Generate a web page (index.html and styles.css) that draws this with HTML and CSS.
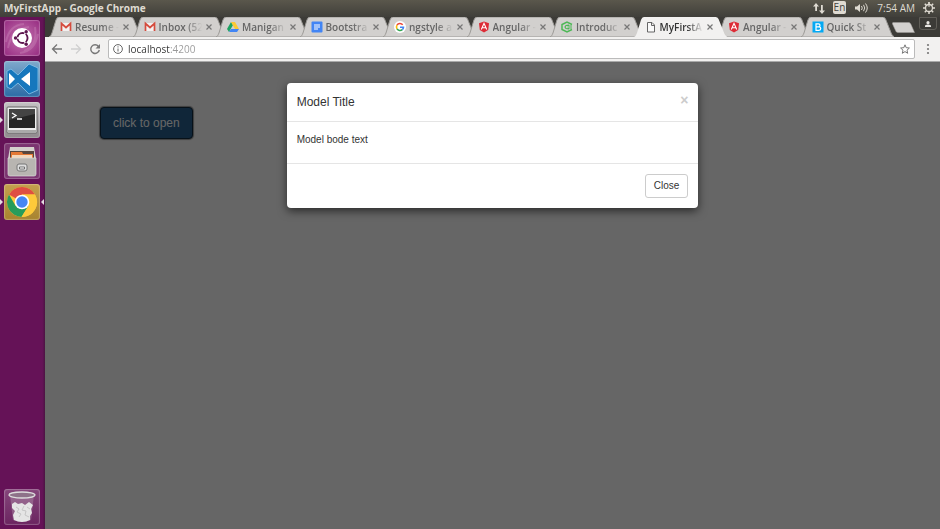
FILE: index.html
```html
<!DOCTYPE html>
<html lang="en">
<head>
  <meta charset="UTF-8">
  <meta name="viewport" content="width=device-width, initial-scale=1.0">
  <title>MyFirstApp</title>
  <link rel="stylesheet" href="styles.css">
</head>
<body>
  <!-- Shared icons -->
  <svg width="0" height="0" class="sprite" aria-hidden="true">
    <symbol id="tab-shape" viewBox="0 0 94 20" preserveAspectRatio="none">
      <path d="M0 20 C2 19 2 18 3 16 L7 3 Q8 0 10 0 H82 Q84 0 85 2 L91 17 Q92 19 94 20 Z"/>
    </symbol>
    <symbol id="gmail" viewBox="0 0 12 12">
      <path d="M1 2h10v8H1z" fill="#f3f1f0"/>
      <path d="M1.500 10V2.500L6 6.500l4.500-4V10" fill="none" stroke="#d54b3d" stroke-width="1.700"/>
    </symbol>
    <symbol id="angular" viewBox="0 0 12 12">
      <path d="M6 0.500l5 1.800-.8 6.700L6 11.500 1.800 9 1 2.300z" fill="#dd2c36"/>
      <path d="M3.300 8.500L6 2.300l2.700 6.200M4.500 6.800h3" fill="none" stroke="#fff" stroke-width="1.100"/>
    </symbol>
    <symbol id="cross" viewBox="0 0 8 8">
      <path d="M1.500 1.500l5 5M6.500 1.500l-5 5" fill="none" stroke="currentColor" stroke-width="1.200"/>
    </symbol>
  </svg>

  <header class="panel">
    <span class="panel-title">MyFirstApp - Google Chrome</span>
    <div class="indicators">
      <svg width="12" height="12" viewBox="0 0 12 12" fill="#dfdbd2"><path d="M3 1l3 3.500H4V9H2.200V4.500H0zM9 12L6 8.500h2V3h1.800v5.500H12z"/></svg>
      <span class="lang">En</span>
      <svg width="15" height="12" viewBox="0 0 15 12" fill="none" stroke="#dfdbd2"><path d="M1 4.500h2L6 2v8L3 7.500H1z" fill="#dfdbd2" stroke="none"/><path d="M7.500 4q1.500 2 0 4M9.500 2.800q2.500 3.200 0 6.400M11.500 1.500q3.500 4.500 0 9"/></svg>
      <time class="clock">7:54 AM</time>
      <svg width="12" height="12" viewBox="0 0 12 12" fill="none" stroke="#dfdbd2"><circle cx="6" cy="6" r="3.500" stroke-width="1.300"/><path d="M6 0v3M6 9.500V12M0 6h2.500M9.500 6H12M1.800 1.800l1.700 1.700M8.500 8.500l1.700 1.700M10.200 1.800L8.500 3.500M1.800 10.200l1.700-1.700" stroke-width="1.500"/><path d="M6 0v5" stroke-width="1"/></svg>
    </div>
  </header>

  <div class="desktop">
    <nav class="launcher">
      <a href="#" class="app app-dash" aria-label="Dash">
        <svg viewBox="0 0 36 36">
          <path d="M2 22Q5 5 20 4M34 14Q31 31 16 33M4 28Q7 10 25 7M31 7Q34 25 20 31" fill="none" stroke="#d79ac6" stroke-opacity=".3" stroke-width="2"/>
          <circle cx="18" cy="18" r="10" fill="#fff"/>
          <circle cx="18.500" cy="18" r="5" fill="none" stroke="#5e1750" stroke-width="2"/>
          <path d="M18.500 18L11 18M18.500 18l4-7M18.500 18l4 7" stroke="#fff" stroke-width="1.500"/>
          <circle cx="18.500" cy="18" r="3.800" fill="#fff"/>
          <g fill="#5e1750"><circle cx="11.500" cy="18" r="1.700"/><circle cx="22.200" cy="11.800" r="1.700"/><circle cx="22.200" cy="24.200" r="1.700"/></g>
        </svg>
      </a>
      <a href="#" class="app app-code running" aria-label="Visual Studio Code">
        <svg viewBox="0 0 36 36">
          <path d="M25 3l9 4v22l-9 4L14 22l-7 6-4-2V10l4-2 7 6z" fill="#1677bd" stroke="#8cc4e8" stroke-width=".8"/>
          <path d="M5 12l6 6-6 6zM26 11v14l-9-7z" fill="#fff"/>
        </svg>
      </a>
      <a href="#" class="app app-term running" aria-label="Terminal">
        <svg viewBox="0 0 36 36">
          <rect x="3" y="5" width="30" height="26" rx="1" fill="#eee" stroke="#666"/>
          <rect x="5" y="7" width="26" height="19" fill="#252525"/>
          <path d="M5 7h26v5L5 18z" fill="#444"/>
          <path d="M8 11l4 2.500L8 16M13 17h5" fill="none" stroke="#fff" stroke-width="1.300"/>
          <path d="M4 29h28" stroke="#aaa" stroke-width="2"/>
        </svg>
      </a>
      <a href="#" class="app app-files" aria-label="Files">
        <svg viewBox="0 0 36 36">
          <path d="M6 4h24l2 12H4z" fill="#d5d1cd"/>
          <path d="M6 8h24v8H6z" fill="#58463e"/>
          <path d="M7 9h11l1 2h10v5H7z" fill="#e57936"/>
          <path d="M8 12h20v4H8z" fill="#f3d8bd"/>
          <path d="M4 15h28v16q0 2-2 2H6q-2 0-2-2z" fill="#b8b5b1" stroke="#ddd" stroke-width=".7"/>
          <rect x="13" y="21" width="10" height="7" rx="2" fill="#ddd" stroke="#777"/>
          <path d="M15.500 26v-2h5v2z" fill="#f7f7f7" stroke="#555" stroke-width=".8"/>
        </svg>
      </a>
      <a href="#" class="app app-chrome running active" aria-label="Google Chrome">
        <svg viewBox="0 0 36 36">
          <circle cx="18" cy="18" r="15" fill="#fdc93b"/>
          <path d="M18 18L5 10.500A15 15 0 0 1 31 10.500H18z" fill="#df4f42"/>
          <path d="M5 10.500A15 15 0 0 0 17.500 33L24.500 21.700 18 18 11.500 21.700z" fill="#279c5b"/>
          <path d="M31 10.500H18L24.500 21.700 17.500 33A15 15 0 0 0 31 10.500z" fill="#fdc93b"/>
          <circle cx="18" cy="18" r="7.300" fill="#fff"/>
          <circle cx="18" cy="18" r="5.700" fill="#4586f3"/>
        </svg>
      </a>
      <a href="#" class="app app-trash" aria-label="Trash">
        <svg viewBox="0 0 36 36">
          <path d="M6 6l3 25q9 4 18 0l3-25z" fill="#b69db2" fill-opacity=".4"/>
          <path d="M8 15l3-2 3 2 4-1 3 2 4-3 4 3-2 4 1 4-2 3v4q-8 4-16 0l-1-5 2-4-3-3z" fill="#e5e5e5"/>
          <path d="M12 18l3 2-2 3 4 2-2 3M20 17l-2 4 4 1-1 4 4 2M23 18l3 2" fill="none" stroke="#c6c6c6"/>
          <ellipse cx="18" cy="6" rx="13" ry="3" fill="#8e7289" stroke="#ddd" stroke-width="1.300"/>
        </svg>
      </a>
    </nav>

    <div class="browser">
      <div class="tab-strip">
        <div class="tabs">
          <div class="tab">
            <svg class="tab-bg"><use href="#tab-shape"/></svg>
            <svg class="favicon"><use href="#gmail"/></svg>
            <a href="#">Resume -</a>
            <button aria-label="Close tab"><svg><use href="#cross"/></svg></button>
          </div>
          <div class="tab">
            <svg class="tab-bg"><use href="#tab-shape"/></svg>
            <svg class="favicon"><use href="#gmail"/></svg>
            <a href="#">Inbox (52</a>
            <button aria-label="Close tab"><svg><use href="#cross"/></svg></button>
          </div>
          <div class="tab">
            <svg class="tab-bg"><use href="#tab-shape"/></svg>
            <svg class="favicon" viewBox="0 0 12 12"><path d="M4 1L0 8l2 3 4-7z" fill="#1da362"/><path d="M4 1h4l4 7H8z" fill="#fcc934"/><path d="M4 8h8l-2 3H2z" fill="#4285f4"/></svg>
            <a href="#">Manigan</a>
            <button aria-label="Close tab"><svg><use href="#cross"/></svg></button>
          </div>
          <div class="tab">
            <svg class="tab-bg"><use href="#tab-shape"/></svg>
            <svg class="favicon" viewBox="0 0 12 12"><rect x=".5" y=".5" width="11" height="11" rx="1" fill="#4285f4"/><path d="M3 4h6M3 6h6M3 8h4" stroke="#fff"/></svg>
            <a href="#">Bootstra</a>
            <button aria-label="Close tab"><svg><use href="#cross"/></svg></button>
          </div>
          <div class="tab">
            <svg class="tab-bg"><use href="#tab-shape"/></svg>
            <svg class="favicon" viewBox="0 0 12 12"><circle cx="6" cy="6" r="6" fill="#fff"/><g fill="none" stroke-width="1.600"><path d="M8.700 3.800A3.500 3.500 0 0 0 3 4.200" stroke="#ea4335"/><path d="M3 4.200a3.500 3.500 0 0 0 0 3.600" stroke="#fbbc05"/><path d="M3 7.800a3.500 3.500 0 0 0 5.300.8" stroke="#34a853"/><path d="M8.300 8.600Q9.500 7.500 9.500 6.200H6" stroke="#4285f4"/></g></svg>
            <a href="#">ngstyle a</a>
            <button aria-label="Close tab"><svg><use href="#cross"/></svg></button>
          </div>
          <div class="tab">
            <svg class="tab-bg"><use href="#tab-shape"/></svg>
            <svg class="favicon"><use href="#angular"/></svg>
            <a href="#">Angular -</a>
            <button aria-label="Close tab"><svg><use href="#cross"/></svg></button>
          </div>
          <div class="tab">
            <svg class="tab-bg"><use href="#tab-shape"/></svg>
            <svg class="favicon" viewBox="0 0 12 12"><path d="M11 3.500L6 1 1 3.500v5L6 11l5-2.500" fill="none" stroke="#4db856" stroke-width="1.500"/><path d="M11 5H6.500M11 7H6.500M8 4L5 4.500 4 6l1 1.500L8 8" fill="none" stroke="#4db856" stroke-width="1.200"/></svg>
            <a href="#">Introduc</a>
            <button aria-label="Close tab"><svg><use href="#cross"/></svg></button>
          </div>
          <div class="tab current">
            <svg class="tab-bg"><use href="#tab-shape"/></svg>
            <svg class="favicon" viewBox="0 0 12 12"><path d="M2.500 1.500H7L9.500 4v7h-7zM6.500 1.500v3h3" fill="#fafafa" stroke="#666"/></svg>
            <a href="#">MyFirstA</a>
            <button aria-label="Close tab"><svg><use href="#cross"/></svg></button>
          </div>
          <div class="tab">
            <svg class="tab-bg"><use href="#tab-shape"/></svg>
            <svg class="favicon"><use href="#angular"/></svg>
            <a href="#">Angular -</a>
            <button aria-label="Close tab"><svg><use href="#cross"/></svg></button>
          </div>
          <div class="tab">
            <svg class="tab-bg"><use href="#tab-shape"/></svg>
            <svg class="favicon" viewBox="0 0 12 12"><rect x=".5" y=".5" width="11" height="11" fill="#03a9f4"/><path d="M4 2.800h2.500a1.500 1.500 0 0 1 0 3H4h3a1.700 1.700 0 0 1 0 3.500H4z" fill="none" stroke="#fff" stroke-width="1.200"/></svg>
            <a href="#">Quick St</a>
            <button aria-label="Close tab"><svg><use href="#cross"/></svg></button>
          </div>
        </div>
        <button class="new-tab" aria-label="New tab"><svg width="23" height="11" viewBox="0 0 23 11"><path d="M1 .5h16q1 0 2 2l3.500 8H6q-1.500 0-2-1L.5 2Q0 .5 1 .5z" fill="#d3d1cf" stroke="#a19f9b" stroke-width=".5"/></svg></button>
        <button class="profile" aria-label="Profile"><svg width="6" height="6" viewBox="0 0 6 6" fill="#e8e6e2"><circle cx="3" cy="1.700" r="1.600"/><path d="M0 6V4.500Q3 2.500 6 4.500V6z"/></svg></button>
      </div>

      <div class="toolbar">
        <button aria-label="Back"><svg width="12" height="12" viewBox="0 0 12 12"><path d="M11 6H2M6 1.500L1.500 6 6 10.500" fill="none" stroke="#777" stroke-width="1.300"/></svg></button>
        <button aria-label="Forward" disabled><svg width="12" height="12" viewBox="0 0 12 12"><path d="M1 6h9M6 1.500L10.500 6 6 10.500" fill="none" stroke="#d0d0d0" stroke-width="1.300"/></svg></button>
        <button aria-label="Reload"><svg width="12" height="12" viewBox="0 0 12 12"><path d="M9.500 3.500A4.300 4.300 0 1 0 10.300 7" fill="none" stroke="#777" stroke-width="1.400"/><path d="M11 1v4.500H6.500z" fill="#777"/></svg></button>
        <div class="omnibox">
          <svg width="10" height="10" viewBox="0 0 10 10" fill="none" stroke="#666"><circle cx="5" cy="5" r="4.400"/><path d="M5 4.500v3M5 2.300v1.200"/></svg>
          <input type="text" value="localhost:4200" aria-label="Address">
          <button aria-label="Bookmark"><svg width="10" height="10" viewBox="0 0 10 10"><path d="M5 .8l1.200 2.900 3.200.3L7 6.200l.7 3.100L5 7.600 2.300 9.300 3 6.200.6 4l3.200-.3z" fill="none" stroke="#777"/></svg></button>
        </div>
        <button class="menu" aria-label="Menu"><svg width="4" height="12" viewBox="0 0 4 12" fill="#777"><circle cx="2" cy="2" r="1.100"/><circle cx="2" cy="6" r="1.100"/><circle cx="2" cy="10" r="1.100"/></svg></button>
      </div>

      <main class="page">
        <button class="btn-open">click to open</button>

        <div class="backdrop">
          <div class="modal" role="dialog" aria-labelledby="modal-title">
            <div class="modal-header">
              <h4 id="modal-title">Model Title</h4>
              <button class="modal-x" aria-label="Close">&times;</button>
            </div>
            <div class="modal-body">
              <p>Model bode text</p>
            </div>
            <div class="modal-footer">
              <button class="btn-close">Close</button>
            </div>
          </div>
        </div>
      </main>
    </div>
  </div>
</body>
</html>
```
FILE: styles.css
```css
* {
  box-sizing: border-box;
}

body {
  margin: 0;
  height: 100vh;
  display: flex;
  flex-direction: column;
  overflow: hidden;
  font-family: "Open Sans", "Noto Sans", sans-serif;
  font-size: 10px;
  background: #3c3b37;
}

button {
  padding: 0;
  border: none;
  background: none;
  font-family: inherit;
  cursor: pointer;
}

a {
  color: inherit;
  text-decoration: none;
}

svg {
  display: block;
  flex-shrink: 0;
}

.sprite {
  position: absolute;
}

/* Top panel */
.panel {
  display: flex;
  justify-content: space-between;
  align-items: center;
  height: 17px;
  padding: 0 5px 2px 4px;
  background: linear-gradient(#5a574c, #403f3a);
  color: #dfdbd2;
}

.panel-title {
  font-weight: bold;
}

.indicators {
  display: flex;
  align-items: center;
  gap: 8px;
}

.lang {
  padding: 0 1px;
  border-radius: 2px;
  background: #dfdbd2;
  color: #45443f;
  line-height: 13px;
}

.desktop {
  flex: 1;
  display: flex;
  min-height: 0;
}

/* Launcher */
.launcher {
  width: 45px;
  padding: 3px 5px 4px 4px;
  display: flex;
  flex-direction: column;
  gap: 5px;
  background: linear-gradient(to right, #651257 94%, #4c1343);
}

.app {
  position: relative;
  height: 36px;
  border-radius: 3px;
  box-shadow: inset 0 0 1px 1px rgba(255, 255, 255, 0.25);
}

.app svg {
  width: 36px;
  height: 36px;
}

.app-dash {
  background: radial-gradient(#c677b1, #94287f);
}

.app-code {
  background: linear-gradient(#7fa9cc, #2c6ba5);
}

.app-term {
  background: linear-gradient(#c4c1c3, #8f898d);
}

.app-files {
  background: #7b3470;
}

.app-chrome {
  background: linear-gradient(#c4a04e, #a8832f);
}

.app-trash {
  margin-top: auto;
  background: linear-gradient(#85467b, #6b2460);
}

.running::before,
.active::after {
  content: "";
  position: absolute;
  top: 15px;
  border: 3px solid transparent;
}

.running::before {
  left: -4px;
  border-left-color: #e5dde3;
  border-right-width: 0;
}

.active::after {
  right: -4px;
  border-right-color: #e5dde3;
  border-left-width: 0;
}

/* Browser */
.browser {
  flex: 1;
  min-width: 0;
  display: flex;
  flex-direction: column;
}

.tab-strip {
  display: flex;
  height: 20px;
  padding: 0 3px 0 4px;
  background: #3c3b37;
}

.tabs {
  flex: 1;
  min-width: 0;
  display: flex;
}

.tab {
  position: relative;
  flex: 1;
  min-width: 0;
  display: flex;
  align-items: center;
  padding-left: 11px;
  color: #666;
}

.tab-bg {
  position: absolute;
  top: 0;
  left: 0;
  width: calc(100% + 10px);
  height: 20px;
  fill: #d2d0ce;
  stroke: #9c9a97;
  stroke-width: 1px;
}

.tab.current {
  z-index: 1;
  color: #333;
}

.current .tab-bg {
  fill: #f2f1f0;
  stroke: none;
}

.favicon {
  position: relative;
  width: 12px;
  height: 12px;
}

.tab a {
  position: relative;
  flex: 1;
  min-width: 0;
  margin: 0 1px 0 3px;
  white-space: nowrap;
  font-weight: 600;
  line-height: 16px;
  -webkit-mask-image: linear-gradient(to right, #000 60%, transparent 96%);
  mask-image: linear-gradient(to right, #000 60%, transparent 96%);
}

.tab button {
  position: relative;
  margin-right: 3px;
  color: #777;
}

.tab button svg {
  width: 8px;
  height: 8px;
}

.new-tab {
  margin-left: 8px;
}

.profile {
  display: flex;
  justify-content: center;
  align-items: center;
  width: 18px;
  height: 13px;
  margin-left: 4px;
  border: 1px solid #605e58;
  border-radius: 0 0 3px 3px;
}

.toolbar {
  display: flex;
  align-items: center;
  gap: 7px;
  height: 25px;
  padding: 0 10px 0 6px;
  background: #f2f1f0;
  border-bottom: 1px solid #aaa;
}

.omnibox {
  flex: 1;
  display: flex;
  align-items: center;
  gap: 5px;
  height: 20px;
  padding: 0 4px;
  border: 1px solid #bbb;
  border-radius: 2px;
  background: #fff;
}

.omnibox input {
  flex: 1;
  min-width: 0;
  padding: 0;
  border: none;
  outline: none;
  font: inherit;
  color: transparent;
  /* host is dark, port is light */
  background: linear-gradient(to right, #333 42px, #999 42px);
  -webkit-background-clip: text;
  background-clip: text;
}

.menu {
  margin-left: 4px;
}

/* Page */
.page {
  position: relative;
  flex: 1;
  padding: 45px 55px;
  background: #fff;
  font-family: "Liberation Sans", Arial, sans-serif;
}

.btn-open {
  padding: 0 12px;
  border: 1px solid #122b40;
  border-radius: 4px;
  background: #286090;
  box-shadow: 0 0 1px 1px #999;
  color: #fff;
  font-size: 12px;
  line-height: 30px;
}

.backdrop {
  position: absolute;
  inset: 0;
  padding-top: 21px;
  background: rgba(0, 0, 0, 0.6);
}

.modal {
  width: 46%;
  margin: 0 auto;
  border-radius: 4px;
  background: #fff;
  box-shadow: 0 3px 10px rgba(0, 0, 0, 0.6);
  color: #333;
}

.modal-header {
  display: flex;
  justify-content: space-between;
  align-items: flex-start;
  padding: 10px;
  border-bottom: 1px solid #e5e5e5;
}

.modal-header h4 {
  margin: 0;
  font-size: 12px;
  font-weight: normal;
  line-height: 18px;
}

.modal-x {
  color: #ccc;
  font-size: 14px;
  font-weight: bold;
  line-height: 14px;
}

.modal-body {
  padding: 10px;
}

.modal-body p {
  margin: 0 0 5px;
  line-height: 16px;
}

.modal-footer {
  padding: 10px;
  border-top: 1px solid #e5e5e5;
  display: flex;
  justify-content: flex-end;
}

.btn-close {
  padding: 0 8px;
  border: 1px solid #ccc;
  border-radius: 3px;
  background: #fff;
  color: #333;
  font-size: 10px;
  line-height: 22px;
}
```
